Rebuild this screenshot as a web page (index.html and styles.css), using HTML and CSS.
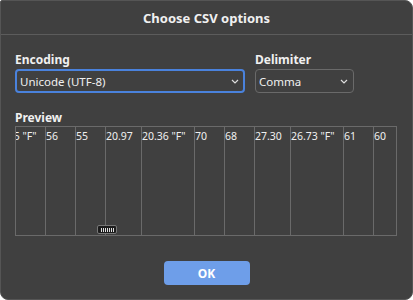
FILE: index.html
```html
<!DOCTYPE html>
<html lang="en">
<head>
    <meta charset="UTF-8">
    <title>Choose CSV options</title>
    <link rel="stylesheet" href="styles.css">
</head>
<body>
    <div class="dialog">
        <div class="title">Choose CSV options</div>
        <div class="content">
            <div class="fields">
                <div class="field encoding">
                    <label>Encoding</label>
                    <div class="select focused">
                        <span>Unicode (UTF-8)</span>
                        <svg width="8" height="5" viewBox="0 0 8 5"><path d="M1 1l3 3 3-3" fill="none" stroke="#ddd" stroke-width="1.2"/></svg>
                    </div>
                </div>
                <div class="field delimiter">
                    <label>Delimiter</label>
                    <div class="select">
                        <span>Comma</span>
                        <svg width="8" height="5" viewBox="0 0 8 5"><path d="M1 1l3 3 3-3" fill="none" stroke="#ddd" stroke-width="1.2"/></svg>
                    </div>
                </div>
            </div>
            <label class="preview-label">Preview</label>
            <div class="preview">
                <!-- scrolled a little to the right, first column is partly hidden -->
                <div class="cols">
                    <div class="col w53">21.15 "F"</div>
                    <div class="col w30">56</div>
                    <div class="col w30">55</div>
                    <div class="col w36">20.97</div>
                    <div class="col w53">20.36 "F"</div>
                    <div class="col w30">70</div>
                    <div class="col w30">68</div>
                    <div class="col w36">27.30</div>
                    <div class="col w53">26.73 "F"</div>
                    <div class="col w30">61</div>
                    <div class="col w30">60</div>
                </div>
                <div class="thumb"><span></span><span></span><span></span><span></span><span></span><span></span><span></span></div>
            </div>
            <div class="buttons">
                <button class="ok">OK</button>
            </div>
        </div>
    </div>
</body>
</html>
```

FILE: styles.css
```css
html, body {
    margin: 0;
    background: #ffffff;
}
body {
    font-family: "Noto Sans", "Open Sans", sans-serif;
    font-size: 12px;
    color: #f0f0f0;
}
.dialog {
    width: 413px;
    height: 300px;
    box-sizing: border-box;
    background: #404040;
    border: 1px solid #555555;
    border-radius: 2px 8px 8px 8px;
    display: flex;
    flex-direction: column;
}
.title {
    height: 33px;
    line-height: 35px;
    text-align: center;
    font-weight: bold;
    font-size: 13px;
    border-bottom: 1px solid #5c5c5c;
}
.content {
    padding: 17px 14px 0 14px;
}
.fields {
    display: flex;
    gap: 10px;
}
.field {
    display: flex;
    flex-direction: column;
}
.encoding {
    width: 230px;
}
.delimiter {
    width: 99px;
}
label {
    font-weight: bold;
    font-size: 12px;
    line-height: 16px;
    height: 16px;
    margin-bottom: 1px;
    display: block;
}
.select {
    height: 24px;
    box-sizing: border-box;
    border: 1px solid #6a6a6a;
    border-radius: 4px;
    display: flex;
    align-items: center;
    justify-content: space-between;
    padding: 0 5px 0 3px;
    font-size: 11.5px;
}
.select.focused {
    border: 2px solid #4a82dc;
    padding: 0 4px 0 3px;
}
.preview-label {
    margin-top: 17px;
    margin-bottom: 0;
}
.preview {
    position: relative;
    width: 382px;
    height: 110px;
    box-sizing: border-box;
    border: 1px solid #6a6a6a;
    overflow: hidden;
}
.cols {
    display: flex;
    height: 100%;
    margin-left: -23px;
}
.col {
    flex: none;
    box-sizing: border-box;
    border-right: 1px solid #6a6a6a;
    padding-top: 2px;
    font-size: 10.5px;
    white-space: nowrap;
    overflow: hidden;
}
.w30 { width: 30px; }
.w36 { width: 36px; }
.w53 { width: 53px; }
.thumb {
    position: absolute;
    left: 81px;
    bottom: 1px;
    width: 20px;
    height: 9px;
    box-sizing: border-box;
    background: #1c1c1c;
    border: 1px solid #777777;
    border-radius: 2px;
    display: flex;
    justify-content: center;
    align-items: center;
    gap: 1px;
}
.thumb span {
    width: 1px;
    height: 4px;
    background: #e0e0e0;
}
.buttons {
    display: flex;
    justify-content: center;
    margin-top: 25px;
}
.ok {
    width: 86px;
    height: 24px;
    border: none;
    border-radius: 4px;
    background: #6e9ee9;
    color: #ffffff;
    font-family: "Noto Sans", "Open Sans", sans-serif;
    font-weight: bold;
    font-size: 12px;
}
```
